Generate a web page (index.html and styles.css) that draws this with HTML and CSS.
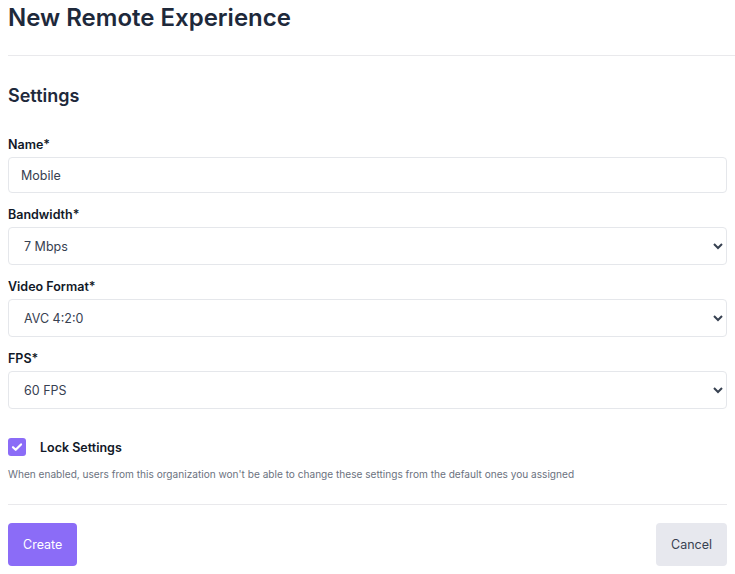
FILE: index.html
```html
<!DOCTYPE html>
<html lang="en">
<head>
<meta charset="utf-8">
<title>New Remote Experience</title>
<link rel="stylesheet" href="styles.css">
</head>
<body>
<div class="page">
  <h1 class="title">New Remote Experience</h1>
  <hr class="divider divider-top">
  <h2 class="section-title">Settings</h2>
  <form class="form">
    <div class="field">
      <label class="label" for="name">Name*</label>
      <input class="input" id="name" type="text" value="Mobile">
    </div>
    <div class="field">
      <label class="label" for="bw">Bandwidth*</label>
      <select class="select" id="bw"><option>7 Mbps</option></select>
    </div>
    <div class="field">
      <label class="label" for="vf">Video Format*</label>
      <select class="select" id="vf"><option>AVC 4:2:0</option></select>
    </div>
    <div class="field">
      <label class="label" for="fps">FPS*</label>
      <select class="select" id="fps"><option>60 FPS</option></select>
    </div>
    <div class="lock">
      <div class="lock-row">
        <span class="checkbox">
          <svg viewBox="0 0 18 18" width="18" height="18"><path d="M5 9.2l2.7 2.6L13 6.4" fill="none" stroke="#fff" stroke-width="2.2" stroke-linecap="round" stroke-linejoin="round"/></svg>
        </span>
        <span class="lock-label">Lock Settings</span>
      </div>
      <p class="help">When enabled, users from this organization won't be able to change these settings from the default ones you assigned</p>
    </div>
    <hr class="divider divider-bottom">
    <div class="actions">
      <button type="button" class="btn btn-primary">Create</button>
      <button type="button" class="btn btn-secondary">Cancel</button>
    </div>
  </form>
</div>
</body>
</html>
```
FILE: styles.css
```css
html, body {
  margin: 0;
  padding: 0;
  background: #ffffff;
}
body {
  font-family: Inter, "Noto Sans", "Liberation Sans", sans-serif;
  color: #1f2937;
}
.page {
  padding: 0 8px 0 8px;
}
.title {
  margin: 0;
  padding-top: 2px;
  font-size: 24px;
  line-height: 32px;
  font-weight: 600;
  color: #1e293b;
}
.divider {
  border: 0;
  height: 1px;
  background: #e9e9ec;
  margin: 0;
}
.divider-top {
  margin-top: 21px;
  margin-right: -8px;
}
.section-title {
  margin: 28px 0 0 0;
  font-size: 18px;
  line-height: 24px;
  font-weight: 600;
  color: #1e293b;
}
.form {
  margin-top: 28px;
  display: flex;
  flex-direction: column;
}
.field {
  display: flex;
  flex-direction: column;
  gap: 3px;
  margin-bottom: 13px;
}
.label {
  font-size: 12.5px;
  line-height: 18px;
  font-weight: 600;
  color: #111827;
}
.input, .select {
  box-sizing: border-box;
  width: 100%;
  height: 38px;
  border: 1px solid #e5e7eb;
  border-radius: 4px;
  background: #ffffff;
  font-family: inherit;
  font-size: 12.5px;
  color: #374151;
  margin: 0;
}
.input {
  height: 36px;
  padding: 0 12px;
  outline: none;
}
.select {
  padding: 0 8px 0 11px;
}
.lock {
  margin-top: 16px;
}
.lock-row {
  display: flex;
  align-items: center;
  gap: 14px;
}
.checkbox {
  width: 18px;
  height: 18px;
  border-radius: 3px;
  background: #8b6cf7;
  display: flex;
}
.lock-label {
  font-size: 12.5px;
  font-weight: 600;
  color: #111827;
}
.help {
  margin: 11px 0 0 0;
  font-size: 10.1px;
  line-height: 14px;
  color: #6b7280;
}
.divider-bottom {
  margin-top: 23px;
}
.actions {
  margin-top: 18px;
  display: flex;
  justify-content: space-between;
}
.btn {
  height: 43px;
  padding: 0 15px;
  border: 0;
  border-radius: 4px;
  font-family: inherit;
  font-size: 12.5px;
  cursor: pointer;
}
.btn-primary {
  background: #8b6cf7;
  color: #ffffff;
}
.btn-secondary {
  background: #e7e8ee;
  color: #374151;
}
```
